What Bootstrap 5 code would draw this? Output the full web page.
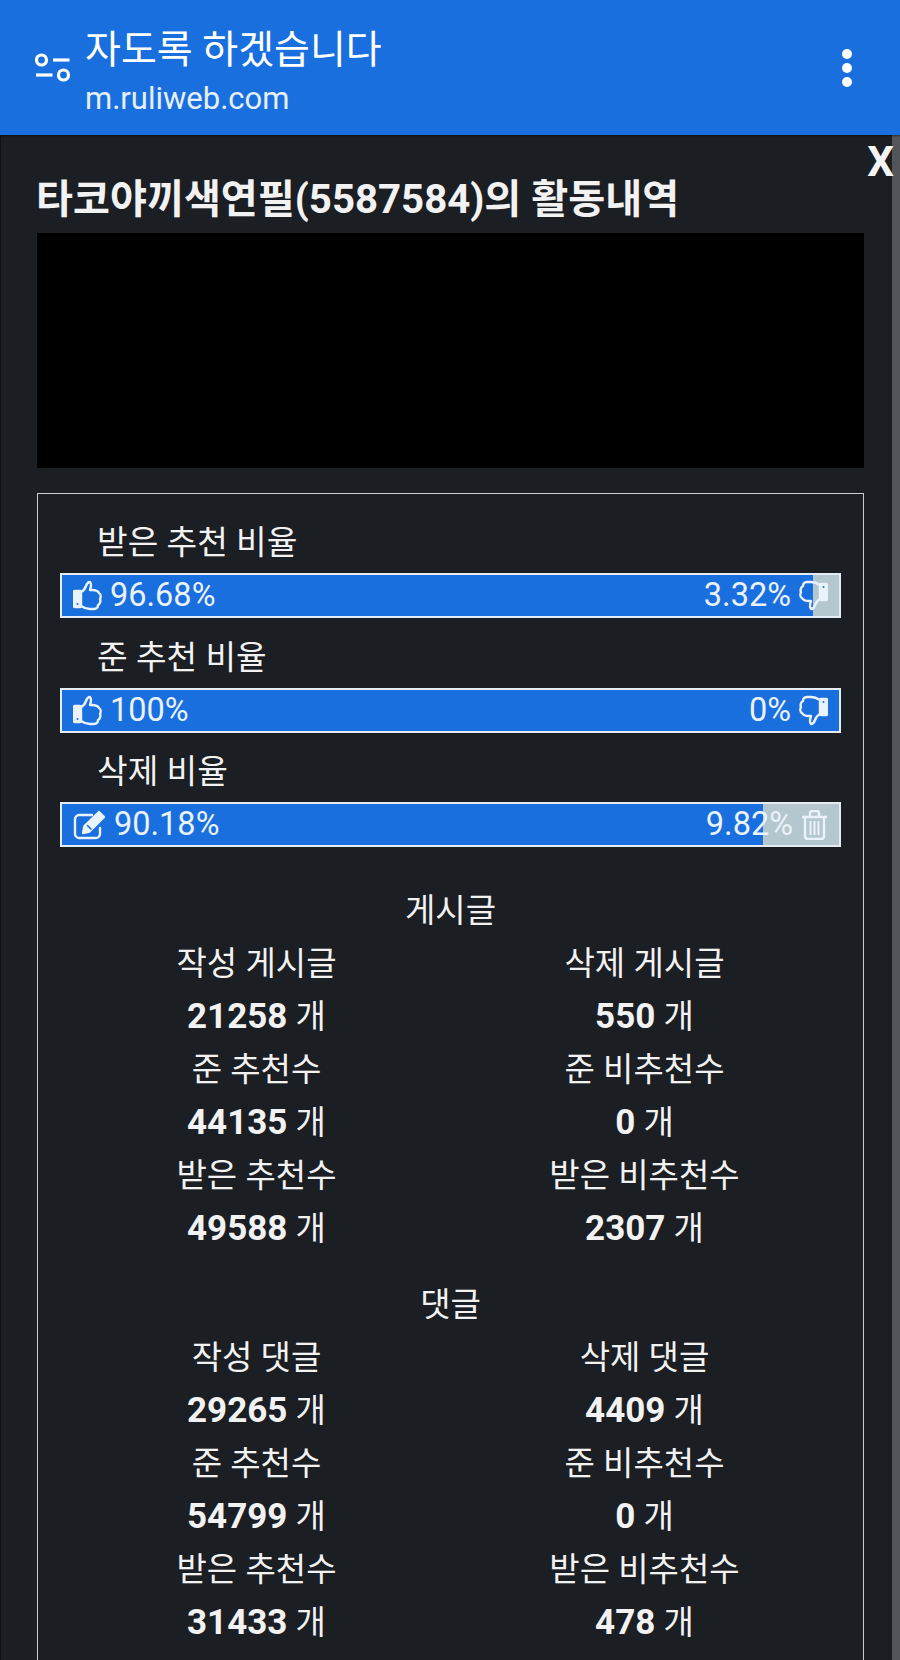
<!doctype html>
<html lang="ko">
<head>
<meta charset="utf-8">
<title>활동내역</title>
<link href="https://cdn.jsdelivr.net/npm/bootstrap@5.3.0/dist/css/bootstrap.min.css" rel="stylesheet">
<style>
html,body{height:1660px;overflow:hidden;background:#1b1e23;}
body{font-family:Roboto,"Noto Sans CJK KR",sans-serif;color:#f2f2f2;}
.app-head{height:135px;background:#1a6fdf;padding:0 47px 0 35px;box-shadow:0 1px 2px rgba(0,0,0,.5);position:relative;z-index:2;}
.app-text{margin-left:6px;}
.app-title{font-size:39px;line-height:50px;color:#fff;padding-top:13px;}
.app-sub{font-size:31px;line-height:48px;color:#e6effb;}
.sheet{position:relative;height:1525px;padding:0 36px 0 36px;border-left:1px solid #0e1013;}
.scroll-track{position:absolute;top:0;right:0;width:8px;height:100%;background:#52555a;}
.close-x{position:absolute;top:2px;right:6px;font-size:42px;line-height:50px;font-weight:700;color:#f4f4f4;z-index:1;}
.sheet-title{font-size:40.2px;line-height:50px;font-weight:700;margin:0;padding-top:40px;height:98px;margin-left:-1px;}
.black-box{height:235px;background:#000;}
.stat-box{margin-top:25px;border:1px solid #c9ccd0;padding:25px 22px 60px;height:1200px;}
.bar-label{font-size:33.3px;line-height:48px;padding-left:37px;margin-bottom:6px;}
.ratio{position:relative;height:45px;border:2px solid #e4ebf2;background:#b4c7cf;border-radius:0;margin-bottom:15.6px;}
.ratio .progress-bar{background:#1a6fdf;}
.ratio-over{position:absolute;inset:0;padding:0 11px;font-size:32.5px;color:#eaf2fb;}
.ratio-over svg{flex:none;}
.sect-head{font-size:33px;line-height:53px;text-align:center;}
.stat-grid{text-align:center;font-size:33px;line-height:53px;padding:0 2.5px;}
.stat-grid b{font-weight:700;font-size:35px;}
.stat-grid .row{--bs-gutter-x:0;}
.sect-gap{margin-top:23px;}
.sect-first{margin-top:37px;}
</style>
</head>
<body>
<header class="app-head d-flex align-items-center">
  <svg width="36" height="31" viewBox="0 0 36 31" fill="none" stroke="#fff" stroke-width="3.2" class="me-2"><circle cx="6.500" cy="8" r="5"/><path d="M18 8h16.500"/><path d="M1 23h16.500"/><circle cx="28.500" cy="23" r="5"/></svg>
  <div class="flex-grow-1 app-text">
    <div class="app-title">자도록 하겠습니다</div>
    <div class="app-sub">m.ruliweb.com</div>
  </div>
  <svg width="12" height="40" viewBox="0 0 12 40" fill="#fff"><circle cx="6" cy="6" r="5"/><circle cx="6" cy="20" r="5"/><circle cx="6" cy="34" r="5"/></svg>
</header>
<main class="sheet">
  <div class="scroll-track"></div>
  <div class="close-x">X</div>
  <h1 class="sheet-title">타코야끼색연필(5587584)의 활동내역</h1>
  <div class="black-box"></div>
  <section class="stat-box">
    <div class="bar-label">받은 추천 비율</div>
    <div class="progress ratio">
      <div class="progress-bar" style="width:96.68%"></div>
      <div class="ratio-over d-flex align-items-center justify-content-between">
        <span class="d-flex align-items-center gap-2"><svg width="29" height="31" viewBox="0 0 29 31" fill="none" stroke="#eaf2fb" stroke-width="2.4" stroke-linejoin="round" stroke-linecap="round"><g transform="rotate(180 14.500 15.500)"><path d="M21 5C18 3 15 2 12 2H8C5 2 4 4 4 6C2 7 1 10 2 12C1 14 1 17 3 18C4 20 6 21 10 21H12C11 24 10 27 12 29C14 29 15 28 16 25C17 22 19 20 21 19"/><rect x="21" y="4" width="7" height="16" rx="1" fill="#eaf2fb"/><circle cx="24.500" cy="7" r="1" fill="#1a6fdf" stroke="none"/></g></svg>96.68%</span>
        <span class="d-flex align-items-center gap-2">3.32%<svg width="29" height="31" viewBox="0 0 29 31" fill="none" stroke="#eaf2fb" stroke-width="2.4" stroke-linejoin="round" stroke-linecap="round"><path d="M21 5C18 3 15 2 12 2H8C5 2 4 4 4 6C2 7 1 10 2 12C1 14 1 17 3 18C4 20 6 21 10 21H12C11 24 10 27 12 29C14 29 15 28 16 25C17 22 19 20 21 19"/><rect x="21" y="4" width="7" height="16" rx="1" fill="#eaf2fb"/><circle cx="24.500" cy="7" r="1" fill="#1a6fdf" stroke="none"/></svg></span>
      </div>
    </div>
    <div class="bar-label">준 추천 비율</div>
    <div class="progress ratio">
      <div class="progress-bar" style="width:100%"></div>
      <div class="ratio-over d-flex align-items-center justify-content-between">
        <span class="d-flex align-items-center gap-2"><svg width="29" height="31" viewBox="0 0 29 31" fill="none" stroke="#eaf2fb" stroke-width="2.4" stroke-linejoin="round" stroke-linecap="round"><g transform="rotate(180 14.500 15.500)"><path d="M21 5C18 3 15 2 12 2H8C5 2 4 4 4 6C2 7 1 10 2 12C1 14 1 17 3 18C4 20 6 21 10 21H12C11 24 10 27 12 29C14 29 15 28 16 25C17 22 19 20 21 19"/><rect x="21" y="4" width="7" height="16" rx="1" fill="#eaf2fb"/><circle cx="24.500" cy="7" r="1" fill="#1a6fdf" stroke="none"/></g></svg>100%</span>
        <span class="d-flex align-items-center gap-2">0%<svg width="29" height="31" viewBox="0 0 29 31" fill="none" stroke="#eaf2fb" stroke-width="2.4" stroke-linejoin="round" stroke-linecap="round"><path d="M21 5C18 3 15 2 12 2H8C5 2 4 4 4 6C2 7 1 10 2 12C1 14 1 17 3 18C4 20 6 21 10 21H12C11 24 10 27 12 29C14 29 15 28 16 25C17 22 19 20 21 19"/><rect x="21" y="4" width="7" height="16" rx="1" fill="#eaf2fb"/><circle cx="24.500" cy="7" r="1" fill="#1a6fdf" stroke="none"/></svg></span>
      </div>
    </div>
    <div class="bar-label">삭제 비율</div>
    <div class="progress ratio">
      <div class="progress-bar" style="width:90.18%"></div>
      <div class="ratio-over d-flex align-items-center justify-content-between">
        <span class="d-flex align-items-center gap-2"><svg width="33" height="30" viewBox="0 0 33 30" fill="none" stroke="#eaf2fb" stroke-width="2.4" stroke-linejoin="round" stroke-linecap="round"><path d="M27 18v6c0 2-2 4-4 4H6c-2 0-4-2-4-4V9c0-2 2-4 4-4h13"/><path d="M10 23 11.500 16 26 2l5 5-14.500 14.500z" fill="#eaf2fb"/><path d="M14.500 15.500l3.500 3.500" stroke="#1a6fdf" stroke-width="1.500"/></svg>90.18%</span>
        <span class="d-flex align-items-center gap-2">9.82%<svg width="27" height="30" viewBox="0 0 27 30" fill="none" stroke="#eaf2fb" stroke-width="2.4" stroke-linejoin="round"><path d="M1 7h25M9 7V3c0-1 1-2 2-2h5c1 0 2 1 2 2v4M4 7v19c0 2 1 3 3 3h13c2 0 3-1 3-3V7"/><path d="M9.500 11v14M13.500 11v14M17.500 11v14" stroke-width="2"/></svg></span>
      </div>
    </div>
    <div class="sect-head sect-first">게시글</div>
    <div class="stat-grid">
      <div class="row"><div class="col-6">작성 게시글</div><div class="col-6">삭제 게시글</div></div>
      <div class="row"><div class="col-6"><b>21258</b> 개</div><div class="col-6"><b>550</b> 개</div></div>
      <div class="row"><div class="col-6">준 추천수</div><div class="col-6">준 비추천수</div></div>
      <div class="row"><div class="col-6"><b>44135</b> 개</div><div class="col-6"><b>0</b> 개</div></div>
      <div class="row"><div class="col-6">받은 추천수</div><div class="col-6">받은 비추천수</div></div>
      <div class="row"><div class="col-6"><b>49588</b> 개</div><div class="col-6"><b>2307</b> 개</div></div>
    </div>
    <div class="sect-head sect-gap">댓글</div>
    <div class="stat-grid">
      <div class="row"><div class="col-6">작성 댓글</div><div class="col-6">삭제 댓글</div></div>
      <div class="row"><div class="col-6"><b>29265</b> 개</div><div class="col-6"><b>4409</b> 개</div></div>
      <div class="row"><div class="col-6">준 추천수</div><div class="col-6">준 비추천수</div></div>
      <div class="row"><div class="col-6"><b>54799</b> 개</div><div class="col-6"><b>0</b> 개</div></div>
      <div class="row"><div class="col-6">받은 추천수</div><div class="col-6">받은 비추천수</div></div>
      <div class="row"><div class="col-6"><b>31433</b> 개</div><div class="col-6"><b>478</b> 개</div></div>
    </div>
  </section>
</main>
<script src="https://cdn.jsdelivr.net/npm/bootstrap@5.3.0/dist/js/bootstrap.bundle.min.js"></script>
</body>
</html>
